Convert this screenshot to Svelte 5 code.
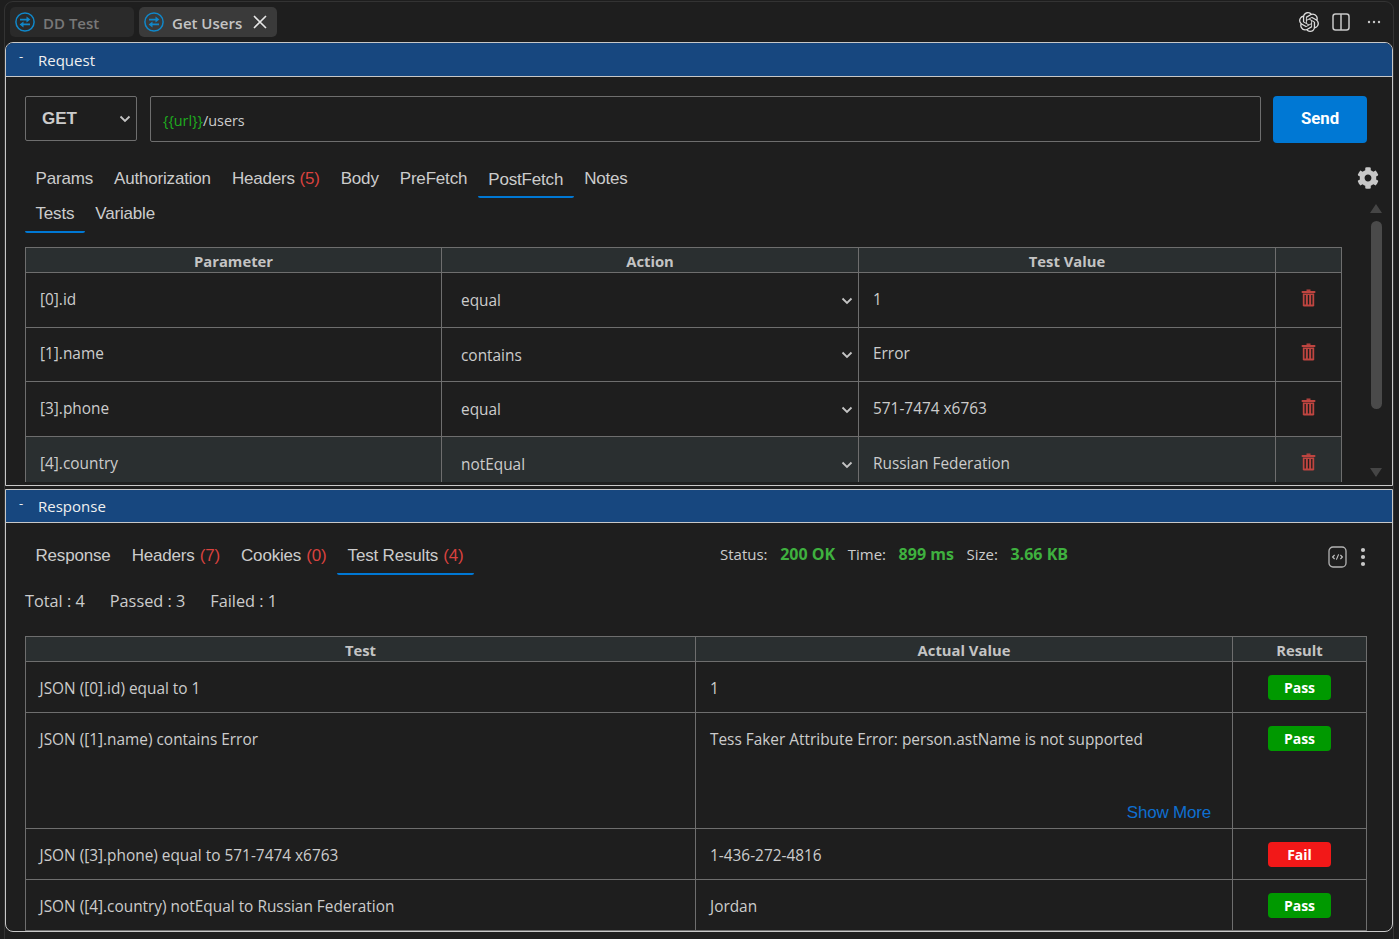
<script>
  const reqTabs = [
    { n: 'Params' }, { n: 'Authorization' }, { n: 'Headers', c: '(5)' }, { n: 'Body' },
    { n: 'PreFetch' }, { n: 'PostFetch', active: true }, { n: 'Notes' }
  ];
  const subTabs = [{ n: 'Tests', active: true }, { n: 'Variable' }];
  const resTabs = [
    { n: 'Response' }, { n: 'Headers', c: '(7)' }, { n: 'Cookies', c: '(0)' },
    { n: 'Test Results', c: '(4)', active: true }
  ];
  const rows = [
    { p: '[0].id', a: 'equal', v: '1', h: 55 },
    { p: '[1].name', a: 'contains', v: 'Error', h: 54 },
    { p: '[3].phone', a: 'equal', v: '571-7474 x6763', h: 55 },
    { p: '[4].country', a: 'notEqual', v: 'Russian Federation', h: 54, alt: true }
  ];
  const results = [
    { t: 'JSON ([0].id) equal to 1', v: '1', r: 'Pass', h: 51 },
    { t: 'JSON ([1].name) contains Error', v: 'Tess Faker Attribute Error: person.astName is not supported', r: 'Pass', h: 116, more: true },
    { t: 'JSON ([3].phone) equal to 571-7474 x6763', v: '1-436-272-4816', r: 'Fail', h: 51 },
    { t: 'JSON ([4].country) notEqual to Russian Federation', v: 'Jordan', r: 'Pass', h: 51 }
  ];
</script>

{#snippet chevron()}
  <svg class="chev" width="12" height="8" viewBox="0 0 12 8"><path d="M1.5 1.5 6 6l4.5-4.5" fill="none" stroke="currentColor" stroke-width="1.8"/></svg>
{/snippet}

{#snippet swap()}
  <svg class="swap" width="20" height="20" viewBox="0 0 20 20" fill="none">
    <circle cx="10" cy="10" r="9.1" stroke="#1087c9" stroke-width="1.5"/>
    <path d="M5 7.6h7.5M15 12.4H7.5" stroke="#1087c9" stroke-width="1.8"/>
    <path d="M11.5 4.6 15.4 7.6l-3.9 3zM8.5 9.4 4.6 12.4l3.9 3z" fill="#1087c9"/>
  </svg>
{/snippet}

{#snippet tabs(list)}
  {#each list as t}
    <button class="tab" class:active={t.active}>{t.n}{#if t.c}&nbsp;<span class="count">{t.c}</span>{/if}</button>
  {/each}
{/snippet}

{#snippet trash()}
  <svg width="15" height="18" viewBox="0 0 15 18" class="trash">
    <path d="M5.5 1.2h4" stroke="#bf4540" stroke-width="1.4" fill="none"/>
    <rect x="0.5" y="2" width="14" height="2" rx="1" fill="#bf4540"/>
    <path d="M1.8 4.5h11.4v11.7a1.3 1.3 0 0 1-1.3 1.3H3.1a1.3 1.3 0 0 1-1.3-1.3z" fill="#bf4540"/>
    <path d="M4.2 6v9.5M7.5 6v9.5M10.8 6v9.5" stroke="#1e1e1e" stroke-width="1.3" fill="none"/>
  </svg>
{/snippet}

<div class="frame">
  <header class="topbar">
    <div class="doc">
      {@render swap()}<span>DD Test</span>
    </div>
    <div class="doc on">
      {@render swap()}<span>Get Users</span>
      <svg class="close" width="14" height="14" viewBox="0 0 14 14"><path d="M1 1l12 12M13 1 1 13" stroke="#e8e8e8" stroke-width="1.6" fill="none"/></svg>
    </div>
    <div class="actions">
      <svg class="ai" width="20" height="20" viewBox="0 0 24 24" fill="#dcdcdc"><path d="M22.2819 9.8211a5.9847 5.9847 0 0 0-.5157-4.9108 6.0462 6.0462 0 0 0-6.5098-2.9A6.0651 6.0651 0 0 0 4.9807 4.1818a5.9847 5.9847 0 0 0-3.9977 2.9 6.0462 6.0462 0 0 0 .7427 7.0966 5.98 5.98 0 0 0 .511 4.9107 6.051 6.051 0 0 0 6.5146 2.9001A5.9847 5.9847 0 0 0 13.2599 24a6.0557 6.0557 0 0 0 5.7718-4.2058 5.9894 5.9894 0 0 0 3.9977-2.9001 6.0557 6.0557 0 0 0-.7475-7.0729zm-9.022 12.6081a4.4755 4.4755 0 0 1-2.8764-1.0408l.1419-.0804 4.7783-2.7582a.7948.7948 0 0 0 .3927-.6813v-6.7369l2.02 1.1686a.071.071 0 0 1 .038.052v5.5826a4.504 4.504 0 0 1-4.4945 4.4944zm-9.6607-4.1254a4.4708 4.4708 0 0 1-.5346-3.0137l.142.0852 4.783 2.7582a.7712.7712 0 0 0 .7806 0l5.8428-3.3685v2.3324a.0804.0804 0 0 1-.0332.0615L9.74 19.9502a4.4992 4.4992 0 0 1-6.1408-1.6464zM2.3408 7.8956a4.485 4.485 0 0 1 2.3655-1.9728V11.6a.7664.7664 0 0 0 .3879.6765l5.8144 3.3543-2.0201 1.1685a.0757.0757 0 0 1-.071 0l-4.8303-2.7865A4.504 4.504 0 0 1 2.3408 7.872zm16.5963 3.8558L13.1038 8.364 15.1192 7.2a.0757.0757 0 0 1 .071 0l4.8303 2.7913a4.4944 4.4944 0 0 1-.6765 8.1042v-5.6772a.79.79 0 0 0-.407-.667zm2.0107-3.0231l-.142-.0852-4.7735-2.7818a.7759.7759 0 0 0-.7854 0L9.409 9.2297V6.8974a.0662.0662 0 0 1 .0284-.0615l4.8303-2.7866a4.4992 4.4992 0 0 1 6.6802 4.66zM8.3065 12.863l-2.02-1.1638a.0804.0804 0 0 1-.038-.0567V6.0742a4.4992 4.4992 0 0 1 7.3757-3.4537l-.142.0805L8.704 5.459a.7948.7948 0 0 0-.3927.6813zm1.0976-2.3654l2.602-1.4998 2.6069 1.4998v2.9994l-2.5974 1.4997-2.6067-1.4997Z"/></svg>
      <svg class="split" width="18" height="18" viewBox="0 0 18 18" fill="none"><rect x="1" y="1" width="16" height="16" rx="2.5" stroke="#c8c8c8" stroke-width="1.5"/><path d="M9 1v16" stroke="#c8c8c8" stroke-width="1.5"/></svg>
      <svg width="14" height="4" viewBox="0 0 14 4" fill="#c8c8c8"><circle cx="2" cy="2" r="1.2"/><circle cx="7" cy="2" r="1.2"/><circle cx="12" cy="2" r="1.2"/></svg>
    </div>
  </header>

  <section class="panel request">
    <div class="panel-head"><span class="dash">-</span><span>Request</span></div>
    <div class="req-body">
      <div class="urlbar">
        <div class="method"><span>GET</span>{@render chevron()}</div>
        <div class="url"><span class="var">&#123;&#123;url&#125;&#125;</span>/users</div>
        <button class="send">Send</button>
      </div>
      <div class="tabrow first">
        {@render tabs(reqTabs)}
        <svg class="gear" width="22" height="22" viewBox="0 0 512 512"><path fill="#c8c8c8" d="M487.4 315.7l-42.6-24.6c4.3-23.2 4.3-47 0-70.2l42.6-24.6c4.9-2.8 7.1-8.6 5.5-14-11.1-35.6-30-67.8-54.7-94.6-3.8-4.1-10-5.1-14.8-2.3L380.8 110c-17.9-15.4-38.5-27.3-60.8-35.1V25.8c0-5.6-3.9-10.5-9.4-11.7-36.7-8.2-74.3-7.8-109.2 0-5.5 1.2-9.4 6.1-9.4 11.7V75c-22.2 7.9-42.8 19.8-60.8 35.1L88.7 85.5c-4.9-2.8-11-1.9-14.8 2.3-24.7 26.7-43.6 58.9-54.7 94.6-1.7 5.4.6 11.2 5.5 14L67.3 221c-4.3 23.2-4.3 47 0 70.2l-42.6 24.6c-4.9 2.8-7.1 8.6-5.5 14 11.1 35.6 30 67.8 54.7 94.6 3.8 4.1 10 5.1 14.8 2.3l42.6-24.6c17.9 15.4 38.5 27.3 60.8 35.1v49.2c0 5.6 3.9 10.5 9.4 11.7 36.7 8.2 74.3 7.8 109.2 0 5.5-1.2 9.4-6.1 9.4-11.7v-49.2c22.2-7.9 42.8-19.8 60.8-35.1l42.6 24.6c4.9 2.8 11 1.9 14.8-2.3 24.7-26.7 43.6-58.9 54.7-94.6 1.5-5.5-.7-11.3-5.6-14.1zM256 336c-44.1 0-80-35.9-80-80s35.9-80 80-80 80 35.9 80 80-35.9 80-80 80z"/></svg>
      </div>
      <div class="tabrow second">{@render tabs(subTabs)}</div>
      <div class="scroller">
        <div class="clip">
          <div class="table req-table">
            <div class="tr thead"><div>Parameter</div><div>Action</div><div>Test Value</div><div></div></div>
            {#each rows as r}
              <div class="tr" class:alt={r.alt} style="height:{r.h}px">
                <div class="td">{r.p}</div>
                <div class="td sel"><span>{r.a}</span>{@render chevron()}</div>
                <div class="td">{r.v}</div>
                <div class="td del">{@render trash()}</div>
              </div>
            {/each}
          </div>
        </div>
        <div class="scrollbar">
          <i class="arrow up"></i>
          <i class="thumb"></i>
          <i class="arrow down"></i>
        </div>
      </div>
    </div>
  </section>

  <section class="panel response">
    <div class="panel-head"><span class="dash">-</span><span>Response</span></div>
    <div class="res-body">
      <div class="tabrow res-tabs">
        {@render tabs(resTabs)}
        <div class="status">
          <span>Status:</span><b>200 OK</b><span>Time:</span><b>899 ms</b><span>Size:</span><b>3.66 KB</b>
        </div>
        <div class="res-actions">
          <svg width="19" height="22" viewBox="0 0 19 22" fill="none"><rect x="1" y="1" width="17" height="20" rx="4" stroke="#b4b4b4" stroke-width="1.3"/><path d="M6.6 9 4.6 11l2 2M12.4 9l2 2-2 2M10.6 8.4 8.4 13.6" stroke="#c8c8c8" stroke-width="1.1"/></svg>
          <svg width="6" height="20" viewBox="0 0 6 20" fill="#c8c8c8"><circle cx="3" cy="3" r="2.1"/><circle cx="3" cy="10" r="2.1"/><circle cx="3" cy="17" r="2.1"/></svg>
        </div>
      </div>
      <div class="totals"><span>Total : 4</span><span>Passed : 3</span><span>Failed : 1</span></div>
      <div class="table res-table">
        <div class="tr thead"><div>Test</div><div>Actual Value</div><div>Result</div></div>
        {#each results as r}
          <div class="tr" style="height:{r.h}px">
            <div class="td top">{r.t}</div>
            <div class="td top val">{r.v}{#if r.more}<a class="more" href="#more">Show More</a>{/if}</div>
            <div class="td badge-cell"><span class="badge" class:fail={r.r === 'Fail'}>{r.r}</span></div>
          </div>
        {/each}
      </div>
    </div>
  </section>
</div>

<style>
  :global(body) { margin: 0; background: #1e1e1e; overflow: hidden; }
  * { box-sizing: border-box; }
  .frame {
    width: 1390px; height: 950px; margin: 1px 0 0 4px; padding: 0;
    border: 1px solid #333; border-radius: 9px; background: #1e1e1e;
    font-family: "Open Sans", "Noto Sans", sans-serif; color: #ccc; overflow: hidden;
  }
  .topbar { height: 40px; display: flex; align-items: flex-start; padding: 5px 0 0 5px; gap: 5px; position: relative; }
  .doc {
    height: 30px; display: flex; align-items: center; gap: 8px; padding: 0 5px 0 5px; border-radius: 5px;
    background: #2a2a2a; color: #787878; font-size: 15px; font-weight: 600; width: 124px;
  }
  .doc span { padding-top: 2px; }
  .doc.on { background: #3a3a3a; color: #c4c4c4; width: 138px; gap: 8px; }
  .close { margin-left: 3px; }
  .swap { flex: none; margin-top: -1px; }
  .actions { margin-left: auto; height: 30px; display: flex; align-items: center; padding-right: 12px; }
  .ai { margin-right: 13px; }
  .split { margin-right: 17px; }

  .panel { width: 1388px; border: 1px solid #c8c8c8; background: #1e1e1e; overflow: hidden; }
  .request { height: 444px; border-radius: 8px 8px 0 0; }
  .response { height: 443px; margin-top: 3px; border-radius: 0 0 8px 8px; }
  .panel-head {
    height: 34px; background: #17477f; border-bottom: 1px solid #c8c8c8; display: flex; align-items: center;
    color: #f0f0f0; font-size: 15px; padding-left: 13px;
  }
  .response .panel-head { height: 33px; }
  .dash { width: 19px; font-size: 13px; margin-top: -7px; }

  .req-body { padding: 19px 0 0 19px; }
  .urlbar { display: flex; align-items: flex-start; gap: 13px; width: 1342px; }
  .method {
    width: 112px; height: 45px; border: 1px solid #6e6e6e; border-radius: 2px; display: flex; align-items: center;
    justify-content: space-between; padding: 0 5px 0 16px;
    font: bold 17px "Liberation Sans", sans-serif; color: #ccc;
  }
  .url {
    flex: 1; height: 46px; margin-right: -1px; border: 1px solid #6e6e6e; border-radius: 2px; padding: 14px 12px 0;
    font-size: 14.4px; line-height: 20px; color: #ccc;
  }
  .var { color: #1fae1f; }
  .send {
    width: 94px; height: 47px; border: 0; border-radius: 4px; background: #0078d4; color: #fff;
    font: bold 16.8px "Roboto", sans-serif; padding: 0 0 3px;
  }
  .chev { color: #c4c4c4; flex: none; }

  .tabrow { display: flex; align-items: flex-start; position: relative; }
  .first { margin-top: 16px; height: 39px; }
  .second { height: 35px; }
  .tab {
    background: none; border: 0; border-bottom: 2px solid transparent; border-radius: 2px;
    font: 17px "Liberation Sans", sans-serif; color: #ccc; height: 39px; padding: 2px 10.5px 0;
    letter-spacing: -0.18px; white-space: nowrap; line-height: 24px;
  }
  .first .tab.active { border-bottom-color: #0078d4; padding-top: 4px; }
  .second .tab { height: 35px; padding: 0 10.5px 1px; }
  .second .tab.active { border-bottom-color: #0078d4; }
  .count { color: #d9423e; }
  .gear { position: absolute; left: 1332px; top: 8px; }

  .scroller { display: flex; height: 235px; margin-top: 14px; }
  .clip { height: 235px; overflow: hidden; flex: none; }
  .table { font-size: 15.4px; color: #ccc; flex: none; }
  .req-table { width: 1317px; }
  .tr { display: grid; border-left: 1px solid #6e6e6e; border-right: 1px solid #6e6e6e; border-bottom: 1px solid #6e6e6e; }
  .req-table .tr { grid-template-columns: 415px 417px 417px 1fr; }
  .thead {
    height: 26px; background: #2a2f30; border-top: 1px solid #6e6e6e; font-weight: 700; font-size: 14.8px; text-align: center; line-height: 27px; color: #c4c4c4;
  }
  .thead > div + div, .td + .td { border-left: 1px solid #6e6e6e; }
  .td { display: flex; align-items: center; padding: 0 14px 1px; font-size: 15.4px; margin-top: -1px; }
  .td.top { align-items: flex-start; padding: 17px 14px 0 13.5px; line-height: 22px; }
  .td.top.val { padding-left: 14px; }
  .alt { background: #2a2f30; border-bottom: 0; }
  .sel { justify-content: space-between; padding: 2px 5px 0 19px; }
  .del { justify-content: center; padding-bottom: 4px; }
  .scrollbar { width: 12px; margin-left: 29px; margin-top: -43px; position: relative; height: 278px; flex: none; }
  .thumb { position: absolute; left: 0; top: 17px; width: 11px; height: 188px; border-radius: 6px; background: #4a4a4a; }
  .arrow { position: absolute; left: -1px; width: 0; height: 0; border-left: 6.5px solid transparent; border-right: 6.5px solid transparent; }
  .up { top: 0; border-bottom: 9px solid #454545; }
  .down { top: 264px; border-top: 9px solid #454545; }

  .res-body { padding: 20px 0 0 19px; }
  .res-tabs { height: 32px; }
  .res-tabs .tab { height: 32px; padding: 0 10.5px 4px; }
  .res-tabs .tab.active { border-bottom-color: #0078d4; }
  .res-tabs .count { margin-left: 0.6px; }
  .status { position: absolute; left: 695px; top: 1px; display: flex; align-items: center; gap: 12.6px; font-size: 15px; line-height: 20px; }
  .status b { color: #3fb13f; font-weight: 700; font-size: 16px; }
  .res-actions { position: absolute; left: 1303px; top: 3px; display: flex; align-items: center; gap: 13px; }
  .totals { display: flex; gap: 25px; margin-top: 14px; font-size: 16.3px; line-height: 24px; height: 47px; }
  .res-table { width: 1342px; }
  .res-table .tr { grid-template-columns: 669px 537px 1fr; }
  .val { position: relative; }
  .more { position: absolute; right: 21px; bottom: 5px; color: #0f6fd0; font: 17px "Liberation Sans", sans-serif; letter-spacing: -0.2px; text-decoration: none; }
  .badge-cell { align-items: flex-start; justify-content: center; padding-top: 14px; }
  .badge {
    width: 63px; height: 25px; border-radius: 4px; background: #009900; color: #fff; font-size: 14px; font-weight: 700;
    display: flex; align-items: center; justify-content: center;
  }
  .badge.fail { background: #f21818; }
</style>
